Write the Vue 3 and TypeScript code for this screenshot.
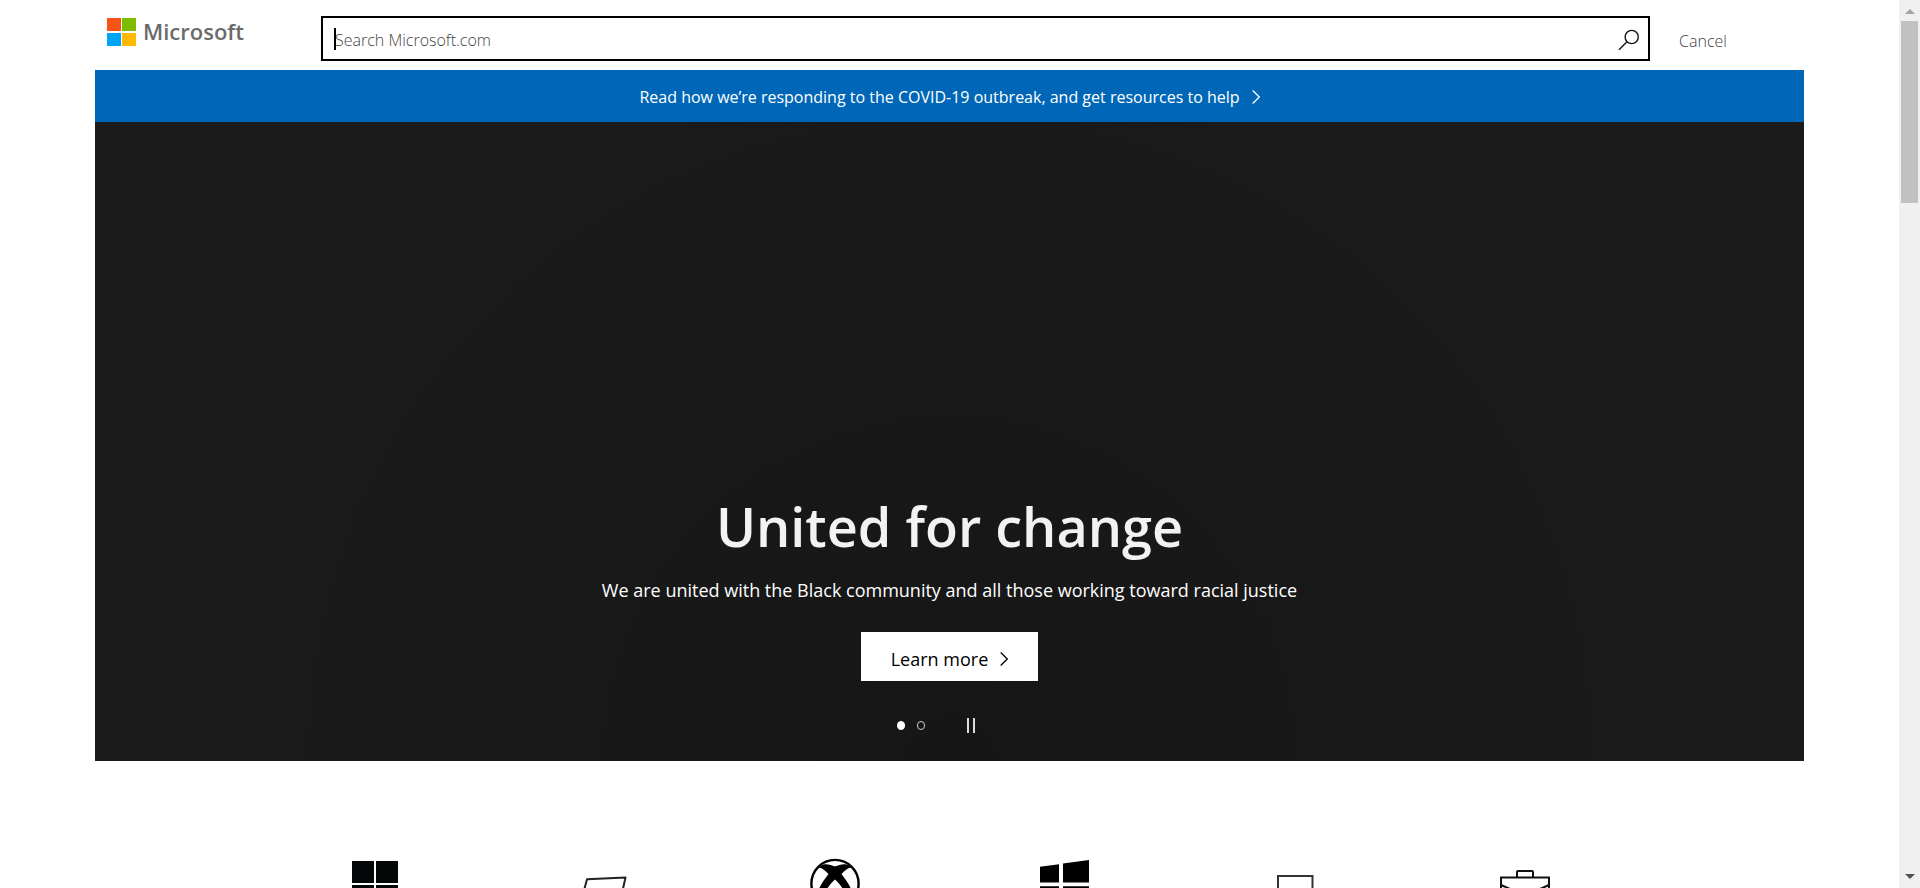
<script setup lang="ts">
import { ref } from 'vue'

interface Shortcut {
  id: string
  label: string
}

const query = ref('')
const activeSlide = ref(0)
const slides: string[] = ['Slide 1', 'Slide 2']

const shortcuts: Shortcut[] = [
  { id: 'microsoft365', label: 'Choose your Microsoft 365' },
  { id: 'surface', label: 'Shop Surface devices' },
  { id: 'xbox', label: 'Buy Xbox games' },
  { id: 'windows', label: 'Get Windows 10' },
  { id: 'devices', label: 'Find your next PC' },
  { id: 'business', label: 'Shop for business' },
]
</script>

<template>
  <div class="window">
    <div class="page">
      <header class="header">
        <a class="logo" href="#" aria-label="Microsoft">
          <svg class="logo-mark" viewBox="0 0 29 28" aria-hidden="true">
            <path fill="#f65314" d="M0 0h14v13H0z" />
            <path fill="#7fbb00" d="M15 0h14v13H15z" />
            <path fill="#00a4f4" d="M0 15h14v13H0z" />
            <path fill="#ffb900" d="M15 15h14v13H15z" />
          </svg>
          <span class="logo-name">Microsoft</span>
        </a>
        <form class="search" role="search" @submit.prevent>
          <input v-model="query" class="search-input" type="text" aria-label="Search Microsoft.com" placeholder="Search Microsoft.com" />
          <span class="caret" aria-hidden="true"></span>
          <button class="search-button" type="submit" aria-label="Search">
            <svg viewBox="0 0 22 22" aria-hidden="true">
              <circle cx="13.7" cy="8" r="6.6" />
              <path d="M9 12.8 1 20.7" />
            </svg>
          </button>
        </form>
        <button class="cancel" type="button">Cancel</button>
      </header>

      <main class="main">
        <a class="notice" href="#">
          <span>Read how we’re responding to the COVID-19 outbreak, and get resources to help</span>
          <svg class="chevron" viewBox="0 0 8 14" aria-hidden="true"><path d="M.7.5 7.3 7 .7 13.5" /></svg>
        </a>
        <section class="hero">
          <h1 class="title">United for change</h1>
          <p class="subtitle">We are united with the Black community and all those working toward racial justice</p>
          <a class="learn" href="#">
            <span>Learn more</span>
            <svg class="chevron" viewBox="0 0 8 14" aria-hidden="true"><path d="M.7.5 7.3 7 .7 13.5" /></svg>
          </a>
          <div class="controls">
            <button
              v-for="(slide, i) in slides"
              :key="slide"
              class="dot"
              :class="{ active: i === activeSlide }"
              type="button"
              :aria-label="slide"
              @click="activeSlide = i"
            ></button>
            <button class="pause" type="button" aria-label="Pause"></button>
          </div>
        </section>

        <nav class="shortcuts" aria-label="Shortcuts">
          <a v-for="item in shortcuts" :key="item.id" class="shortcut" href="#" :aria-label="item.label">
            <svg viewBox="0 0 50 50" aria-hidden="true">
              <path v-if="item.id === 'microsoft365'" fill="#030707" d="M2 3h22v22H2zM26 3h22v22H26zM2 27h22v22H2zM26 27h22v22H26z" />
              <path v-else-if="item.id === 'surface'" fill="none" stroke="#222" stroke-width="2" stroke-linejoin="round" d="M7 21.2 45.5 19.6 40 44H1z" />
              <template v-else-if="item.id === 'xbox'">
                <circle cx="25" cy="25.5" r="23.6" fill="none" stroke="#000" stroke-width="2.4" />
                <path d="M10 8C14 5 20 6 25 8.6 30 6 36 5 40 8L41.500 9.500C38 9.500 35 12.500 31.500 16 36 22 40 27 42.500 35L39 42C35 33 30 26 25 21.500 20 26 15 33 11 42L7.500 35C10 27 14 22 18.500 16 15 12.500 12 9.500 8.500 9.500z" />
              </template>
              <path v-else-if="item.id === 'windows'" d="M0 8.700 19 6.200V24.600H0zM23 5.600 49 2V24.600H23zM0 28.200H19V46.500L0 44zM23 28.200H49V50L23 47z" />
              <path v-else-if="item.id === 'devices'" fill="none" stroke="#333" stroke-width="2" d="M8 18h34.500v28H8z" />
              <g v-else fill="none" stroke="#111" stroke-width="2">
                <path d="M1 19.500h48V48H1zM17 19v-5q0-1 1-1h14q1 0 1 1v5" />
                <path d="M1 27 17 34H33L49 27" />
              </g>
            </svg>
          </a>
        </nav>
      </main>
    </div>

    <div class="scrollbar" aria-hidden="true">
      <span class="arrow up"></span>
      <div class="track"><div class="thumb"></div></div>
      <span class="arrow down"></span>
    </div>
  </div>
</template>

<style>
body {
  margin: 0;
}
</style>

<style scoped>
.window {
  display: flex;
  height: 100vh;
  overflow: hidden;
  background: #fff;
  font-family: "Segoe UI", "Open Sans", "Noto Sans", sans-serif;
}

.window *,
.window *::before {
  box-sizing: border-box;
}

.page {
  flex: 1;
  min-width: 0;
}

a {
  color: inherit;
  text-decoration: none;
}

button {
  padding: 0;
  border: 0;
  background: none;
  font: inherit;
  cursor: pointer;
}

.header {
  display: flex;
  align-items: flex-start;
  width: 90%;
  height: 70px;
  margin: 0 auto;
  padding: 16px 62px 0 12px;
}

.logo {
  display: flex;
  align-items: center;
  gap: 7px;
  width: 214px;
  height: 32px;
}

.logo-mark {
  width: 29px;
  height: 28px;
}

.logo-name {
  padding-bottom: 2px;
  color: #6b6b6b;
  font-size: 22px;
  font-weight: 600;
  line-height: 30px;
}

.search {
  position: relative;
  display: flex;
  flex: 1;
  height: 45px;
  border: 2px solid #000;
}

.search-input {
  flex: 1;
  min-width: 0;
  padding: 2px 12px 0;
  border: 0;
  outline: 0;
  background: transparent;
  color: #000;
  font: inherit;
  font-size: 16px;
}

.search-input::placeholder {
  color: #444;
  font-weight: 300;
  opacity: 1;
}

.caret {
  position: absolute;
  top: 10px;
  left: 11px;
  width: 2px;
  height: 22px;
  background: #000;
}

.search-button {
  display: flex;
  align-items: center;
  justify-content: center;
  width: 38px;
  padding-top: 2px;
}

.search-button svg {
  width: 22px;
  height: 22px;
  fill: none;
  stroke: #111;
  stroke-width: 1.4;
}

.cancel {
  width: 92px;
  height: 50px;
  padding-left: 14px;
  color: #444;
  font-size: 16px;
  font-weight: 300;
  text-align: center;
}

.main {
  width: 90%;
  margin: 0 auto;
}

.notice {
  display: flex;
  align-items: center;
  justify-content: center;
  gap: 12px;
  height: 52px;
  padding-top: 2px;
  background: #0067b8;
  color: #fff;
  font-size: 16px;
}

.chevron {
  width: 8px;
  height: 14px;
  fill: none;
  stroke: currentColor;
  stroke-width: 1.3;
}

.hero {
  display: flex;
  flex-direction: column;
  align-items: center;
  justify-content: flex-end;
  min-height: 72vh;
  padding-bottom: 28px;
  background: radial-gradient(circle at 50% 100%, #161616, #1b1b1b 80%);
  color: #fff;
}

.title {
  margin: 0;
  color: #f2f2f2;
  font-size: 54px;
  font-weight: 600;
  line-height: 72px;
}

.subtitle {
  margin: 14px 0 28px;
  font-size: 18px;
  line-height: 28px;
}

.learn {
  display: flex;
  align-items: center;
  gap: 12px;
  height: 49px;
  padding: 4px 30px 0;
  background: #fff;
  color: #000;
  font-size: 18px;
  font-weight: 500;
}

.controls {
  display: flex;
  align-items: center;
  gap: 12px;
  height: 16px;
  margin-top: 36px;
  margin-right: 28px;
}

.dot {
  width: 8px;
  height: 9px;
  border: 1px solid #ccc;
  border-radius: 4px;
}

.dot.active {
  border-color: #fff;
  background: #fff;
}

.pause {
  width: 8px;
  height: 15px;
  margin-left: 30px;
  border: solid #ddd;
  border-width: 0 2px;
}

.shortcuts {
  display: grid;
  grid-template-columns: repeat(6, 1fr);
  justify-items: center;
  max-width: 1380px;
  margin: 97px auto 0;
}

.shortcut svg {
  display: block;
  width: 50px;
  height: 50px;
}

.scrollbar {
  display: flex;
  flex-direction: column;
  align-items: center;
  width: 21px;
  padding: 9px 0;
  background: #f0f0f0;
}

.arrow {
  border: solid transparent;
  border-width: 0 5px;
}

.up {
  border-bottom: 5px solid #a3a3a3;
}

.down {
  border-top: 5px solid #505050;
}

.track {
  flex: 1;
  width: 17px;
  padding: 7px 0;
}

.thumb {
  height: 21.5%;
  background: #c1c1c1;
}
</style>
